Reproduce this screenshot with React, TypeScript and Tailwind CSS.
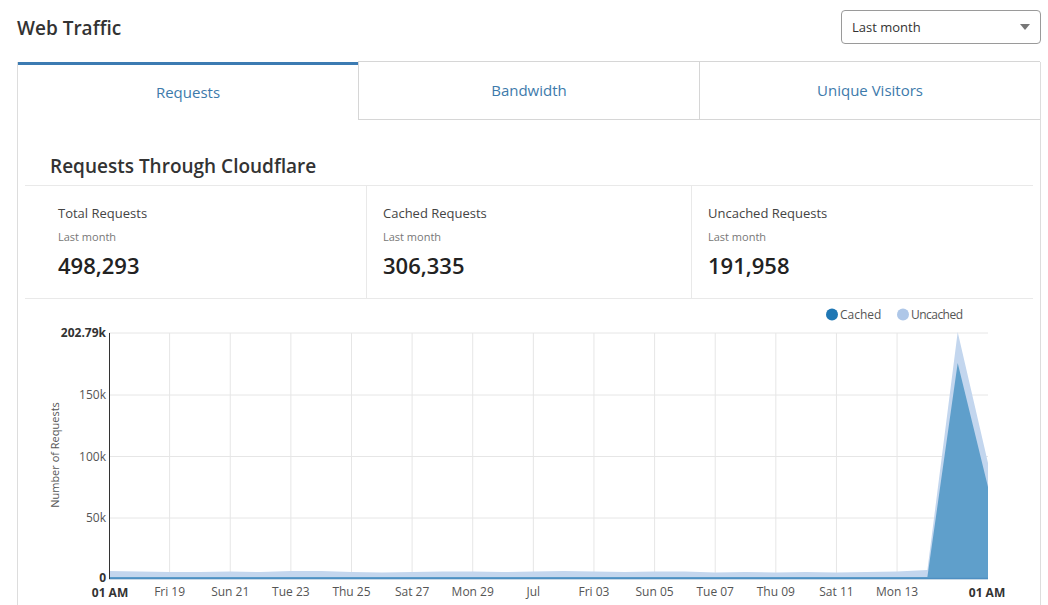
const stats = [
  { label: 'Total Requests', value: '498,293' },
  { label: 'Cached Requests', value: '306,335' },
  { label: 'Uncached Requests', value: '191,958' }
];

const tabs = ['Requests', 'Bandwidth', 'Unique Visitors'];

const xLabels = [
  'Fri 19', 'Sun 21', 'Tue 23', 'Thu 25', 'Sat 27', 'Mon 29', 'Jul',
  'Fri 03', 'Sun 05', 'Tue 07', 'Thu 09', 'Sat 11', 'Mon 13'
];

const yTicks = [
  { y: 333, label: '202.79k', bold: true },
  { y: 395, label: '150k' },
  { y: 456.5, label: '100k' },
  { y: 518, label: '50k' },
  { y: 579, label: '0', bold: true }
];

// chart is drawn in page coordinates (viewBox offset)
const X0 = 109;
const X1 = 988;
const DAY = (X1 - X0) / 29;
const BASE = 579;

const uncachedTop = [
  571, 571.5, 572, 572, 571.5, 572, 571, 571, 572, 572.5, 572, 571.5, 571.5, 572,
  571.5, 571, 571.5, 572, 571.5, 571.5, 572.5, 572, 572.5, 572, 572.5, 572, 571.5, 570,
  332, 463
];
const cachedTop = [...Array(28).fill(577), 363, 487];

function area(tops: number[]) {
  const pts = tops.map((y, i) => `${(X0 + DAY * i).toFixed(1)},${y}`);
  return `${X0},${BASE} ${pts.join(' ')} ${X1},${BASE}`;
}

function TrafficChart() {
  return (
    <svg viewBox="25 299 1007 306" className="block w-[1007px] h-[306px]">
      {/* legend */}
      <circle cx={832} cy={314.5} r={6} fill="#1f77b4" />
      <text x={840} y={318.5} fontSize={12} fill="#555">Cached</text>
      <circle cx={903} cy={314.5} r={6} fill="#aec7e8" />
      <text x={911} y={318.5} fontSize={12} fill="#555" textLength={52}>Uncached</text>

      {/* grid */}
      {yTicks.map((t) => (
        <line key={t.label} x1={X0} x2={X1} y1={t.y} y2={t.y} stroke="#e6e6e6" />
      ))}
      {xLabels.map((_, i) => {
        const x = X0 + DAY * 2 * (i + 1);
        return <line key={i} x1={x} x2={x} y1={333} y2={BASE} stroke="#e6e6e6" />;
      })}

      {/* areas */}
      <polygon points={area(uncachedTop)} fill="#c3d6ee" />
      <polygon points={area(cachedTop)} fill="#5f9fcb" />
      <line x1={X0} x2={X1} y1={578.5} y2={578.5} stroke="#4e8fc2" strokeWidth={1.5} />

      {/* y axis */}
      <line x1={X0 + 0.5} x2={X0 + 0.5} y1={333} y2={BASE} stroke="#333" />
      {yTicks.map((t) => (
        <text
          key={t.label}
          x={106}
          y={t.y + (t.label === '0' ? 3 : 4)}
          textAnchor="end"
          fontSize={12}
          fontWeight={t.bold ? 700 : 400}
          fill={t.bold ? '#333' : '#555'}
        >
          {t.label}
        </text>
      ))}
      <text
        x={0}
        y={0}
        fontSize={11}
        fill="#555"
        textAnchor="middle"
        transform="translate(59 455) rotate(-90)"
      >
        Number of Requests
      </text>

      {/* x axis */}
      <text x={110} y={597} textAnchor="middle" fontSize={12} fontWeight={700} fill="#333">01 AM</text>
      {xLabels.map((l, i) => (
        <text key={l} x={X0 + DAY * 2 * (i + 1)} y={596} textAnchor="middle" fontSize={12} fill="#555">
          {l}
        </text>
      ))}
      <text x={987} y={597} textAnchor="middle" fontSize={12} fontWeight={700} fill="#333">01 AM</text>
    </svg>
  );
}

export default function App() {
  return (
    <div className="w-[1048px] h-[605px] overflow-hidden bg-white pl-[17px] font-['Open_Sans',sans-serif] text-[#333]">
      <div className="flex w-[1024px] items-center justify-between pt-[10px] pb-[18px]">
        <h1 className="pt-[3px] text-[19px] font-semibold leading-none">Web Traffic</h1>
        <button
          type="button"
          className="flex h-[34px] w-[200px] items-center justify-between rounded-[4px] border border-[#9a9a9a] pt-[2px] pl-[10px] pr-[10px] text-[13px] text-[#333]"
        >
          Last month
          <svg width="10" height="6" viewBox="0 0 10 6" className="mb-[2px]">
            <path d="M0 0h10L5 6z" fill="#777" />
          </svg>
        </button>
      </div>

      <div className="w-[1024px] border-x border-[#ddd]">
        <div className="grid grid-cols-[340px_341px_1fr]">
          {tabs.map((t, i) =>
            i === 0 ? (
              <div key={t} className="flex h-[58px] items-center justify-center border-t-[3px] border-[#3c7bb2] text-[15px] text-[#3d7aab]">
                {t}
              </div>
            ) : (
              <div
                key={t}
                className="-mt-px flex h-[59px] items-center justify-center border-y border-l border-[#d6d6d6] text-[15px] text-[#3d7aab]"
              >
                {t}
              </div>
            )
          )}
        </div>

        <div className="px-[7px]">
          <div className="flex h-[65px] items-end pb-[5px] pl-[25px]">
            <h2 className="text-[19px] font-semibold">Requests Through Cloudflare</h2>
          </div>
          <div className="grid h-[114px] grid-cols-[341px_325px_1fr] border-y border-[#e9e9e9]">
            {stats.map((s, i) => (
              <div key={s.label} className={`pt-[18px] ${i > 0 ? 'border-l border-[#e9e9e9] pl-[16px]' : 'pl-[33px]'}`}>
                <div className="text-[13px] leading-[18px] text-[#444]">{s.label}</div>
                <div className="mt-[7px] text-[11px] leading-[16px] text-[#777]">Last month</div>
                <div className="mt-[6px] text-[22px] font-semibold leading-[28px] text-[#222]">{s.value}</div>
              </div>
            ))}
          </div>
          <TrafficChart />
        </div>
      </div>
    </div>
  );
}
